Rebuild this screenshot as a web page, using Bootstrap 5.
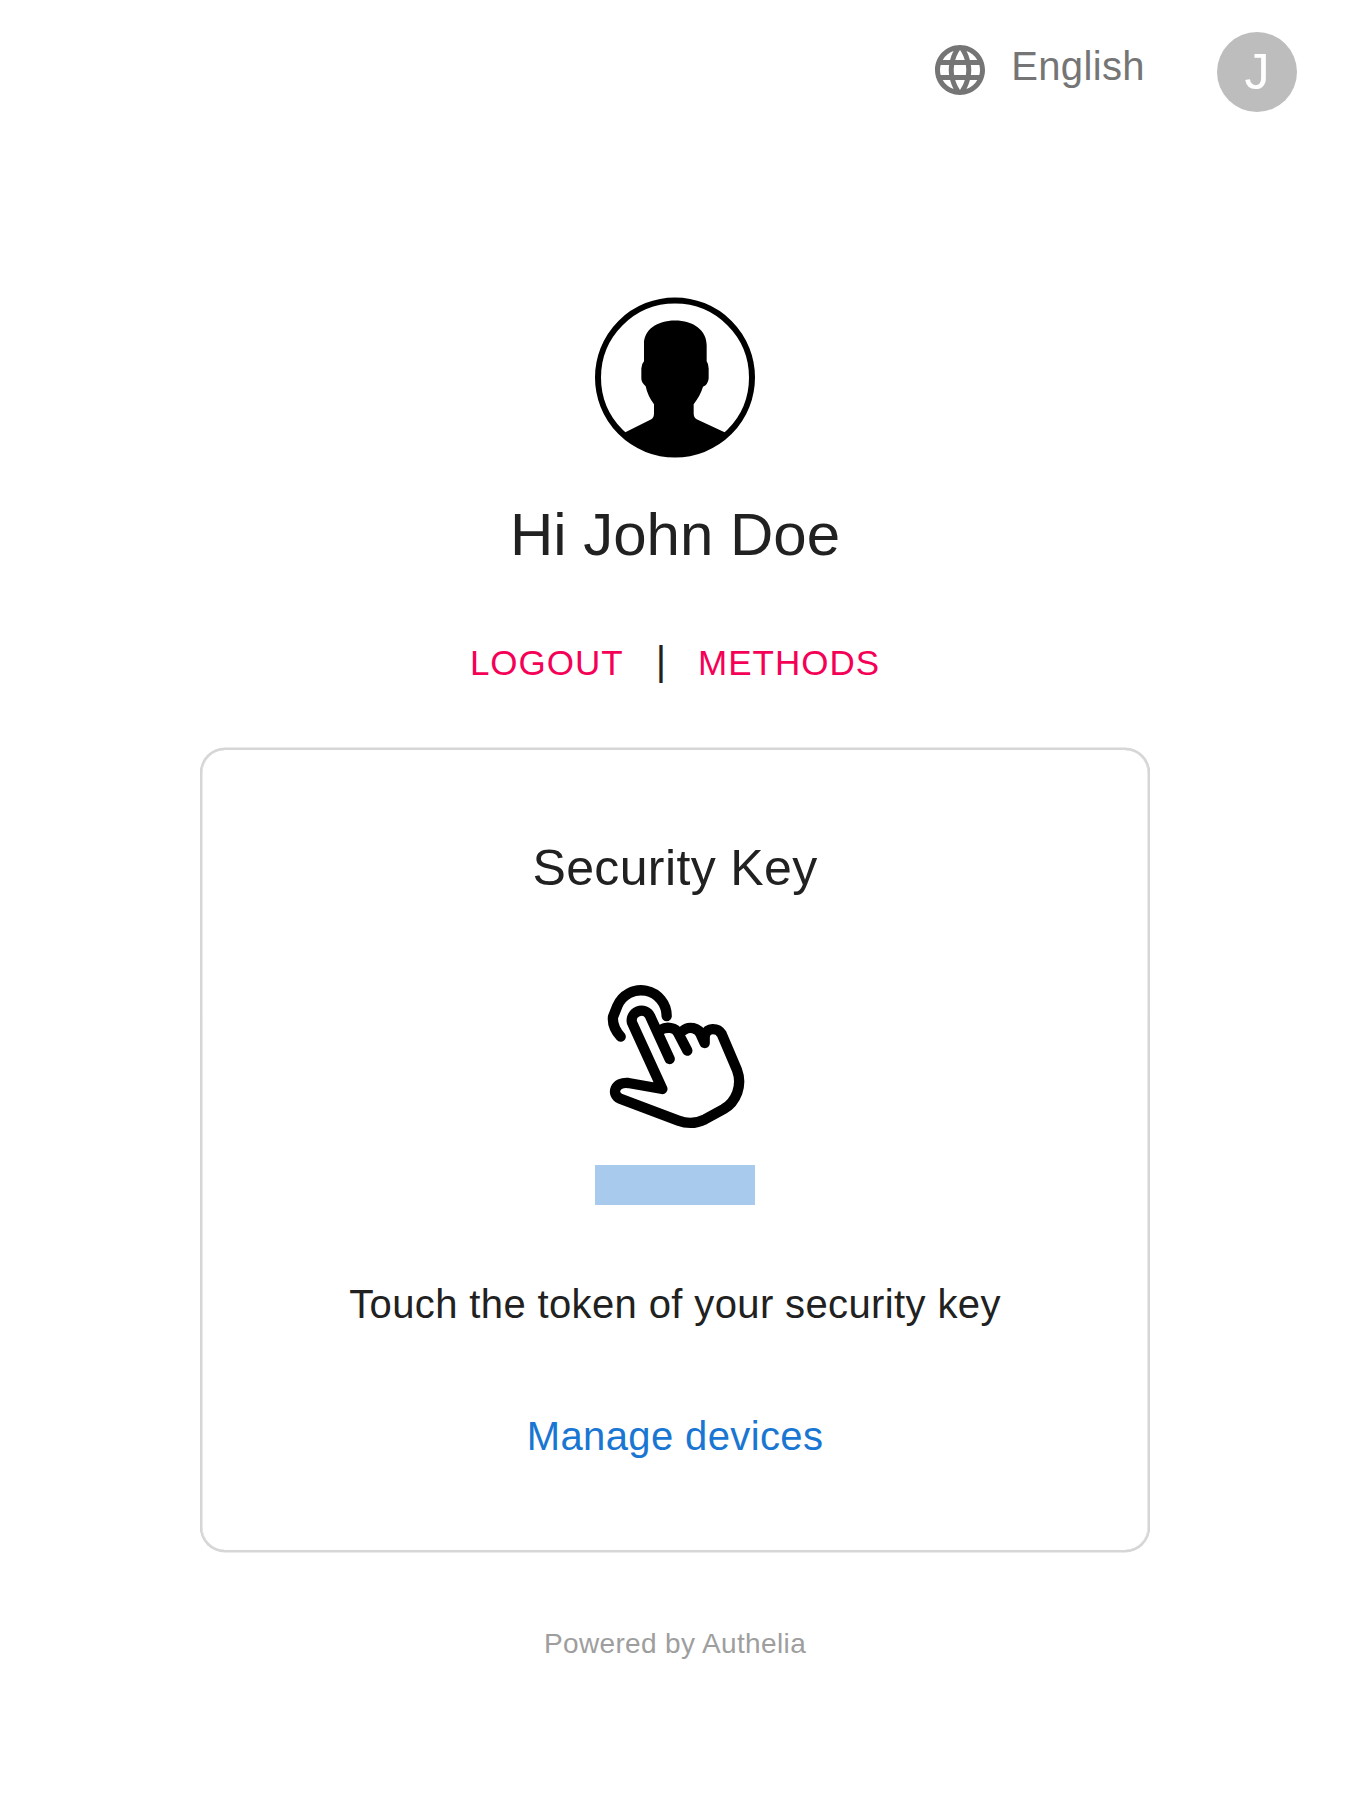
<!DOCTYPE html>
<html lang="en">
<head>
<meta charset="utf-8">
<meta name="viewport" content="width=device-width, initial-scale=1">
<title>Login - Authelia</title>
<link href="https://cdn.jsdelivr.net/npm/bootstrap@5.3.0/dist/css/bootstrap.min.css" rel="stylesheet">
<style>
  body { font-family: "Liberation Sans", Arial, sans-serif; font-size: 40px; line-height: 60px; color: #212121; background: #fff; min-height: 1800px; }
  svg { display: block; }
  a { text-decoration: none; }
  .topbar { height: 112px; padding: 32px 53px 0 0; }
  .lang { color: #757575; letter-spacing: .375px; gap: 21px; margin: 4px 72px 0 0; }
  .lang svg { margin-top: 4px; }
  .avatar { width: 80px; height: 80px; background: #bdbdbd; color: #fff; font-size: 50px; line-height: 50px; }
  .user-pic { margin-top: 173px; }
  .greeting { font-size: 60px; line-height: 80px; margin: 20px 0 0; font-weight: 400; }
  .actions { margin-top: 57px; line-height: 62px; height: 62px; }
  .actions a { color: #f50057; font-size: 35px; letter-spacing: 1px; }
  .actions span { margin: 0 32px; line-height: 58px; }
  .method { width: 950px; height: 804px; margin-top: 54px; border: 2px solid #d6d6d6; border-radius: 25px; padding-top: 78px; background: #fff; box-shadow: 0 .5px 0 #d6d6d6, 0 -.5px 0 #d6d6d6, inset .5px 0 0 #d6d6d6, inset -.5px 0 0 #d6d6d6; }
  .method h2 { font-size: 50px; line-height: 80px; letter-spacing: .375px; font-weight: 400; margin: 0; }
  .touch { margin: 62px 0 0 10px; }
  .timer { width: 160px; height: 40px; background: #a7caed; border-radius: 0; margin-top: 5px; }
  .hint { margin: 69px 0 0; letter-spacing: .375px; }
  .manage { color: #1976d2; margin-top: 72px; letter-spacing: .375px; }
  .powered { color: #9e9e9e; font-size: 28px; line-height: 42px; margin-top: 71px; letter-spacing: .36px; }
</style>
<script src="https://cdn.jsdelivr.net/npm/bootstrap@5.3.0/dist/js/bootstrap.bundle.min.js"></script>
</head>
<body>
<header class="topbar d-flex justify-content-end align-items-start">
  <a href="#" class="lang d-flex align-items-start">
    <svg width="60" height="60" viewBox="0 0 24 24" fill="currentColor" aria-hidden="true"><path d="M11.99 2C6.47 2 2 6.48 2 12s4.47 10 9.99 10C17.52 22 22 17.52 22 12S17.52 2 11.99 2zm6.93 6h-2.95c-.32-1.25-.78-2.45-1.38-3.56 1.84.63 3.37 1.91 4.33 3.56zM12 4.04c.83 1.2 1.48 2.53 1.91 3.96h-3.82c.43-1.43 1.08-2.76 1.91-3.96zM4.26 14C4.1 13.36 4 12.69 4 12s.1-1.36.26-2h3.38c-.08.66-.14 1.32-.14 2s.06 1.34.14 2H4.26zm.82 2h2.95c.32 1.25.78 2.45 1.38 3.56-1.84-.63-3.37-1.9-4.33-3.56zm2.95-8H5.08c.96-1.66 2.49-2.93 4.33-3.56C8.81 5.55 8.35 6.75 8.03 8zM12 19.96c-.83-1.2-1.48-2.53-1.91-3.96h3.82c-.43 1.43-1.08 2.76-1.91 3.96zM14.34 14H9.66c-.09-.66-.16-1.32-.16-2s.07-1.35.16-2h4.68c.09.65.16 1.32.16 2s-.07 1.34-.16 2zm.25 5.56c.6-1.11 1.06-2.31 1.38-3.56h2.95c-.96 1.65-2.49 2.93-4.33 3.56zM16.36 14c.08-.66.14-1.32.14-2s-.06-1.34-.14-2h3.38c.16.64.26 1.31.26 2s-.1 1.36-.26 2h-3.38z"/></svg>
    <span>English</span>
  </a>
  <div class="avatar rounded-circle d-flex align-items-center justify-content-center">J</div>
</header>
<main class="d-flex flex-column align-items-center text-center">
  <svg class="user-pic" width="190" height="190" viewBox="0 -.5 570 570" aria-hidden="true">
    <circle cx="285" cy="277" r="231" fill="none" stroke="#000" stroke-width="18"/>
    <path d="M285 106C340 106 380 135 380 180V228Q386 236 386 250V280Q384 298 369 305Q361 332 341 357V385Q341 397 350 402L437 443A226 226 0 0 1 133 443L214 402Q222 397 222 385V357Q203 332 197 303Q184 292 184 280V250Q184 236 192 228V175C192 135 230 106 285 106Z"/>
  </svg>
  <h1 class="greeting">Hi John Doe</h1>
  <nav class="actions d-flex align-items-start justify-content-center">
    <a href="#">LOGOUT</a><span>|</span><a href="#">METHODS</a>
  </nav>
  <section class="method d-flex flex-column align-items-center">
    <h2>Security Key</h2>
    <svg class="touch" width="180" height="190" viewBox="0 0 540 570" fill="none" stroke="#000" stroke-width="31" stroke-linecap="round" stroke-linejoin="round" aria-hidden="true">
      <path d="M92 200C76 182 67 160 69 141L82 108A77 77 0 0 1 230 138"/>
      <path d="M239 267L180 138A29 29 0 0 0 126 158L217 357L115 339C75 335 62 372 90 386L265 452C295 463 325 458 345 448L400 418C440 395 458 345 441 300L395 192C383 172 350 172 345 195"/>
      <path d="M213 179C230 169 257 172 265 190L292 242M281 181C295 168 326 172 333 195L344 219V195"/>
    </svg>
    <div class="timer progress" role="progressbar" aria-label="Time left"></div>
    <p class="hint">Touch the token of your security key</p>
    <a href="#" class="manage">Manage devices</a>
  </section>
  <a href="#" class="powered">Powered by Authelia</a>
</main>
</body>
</html>
